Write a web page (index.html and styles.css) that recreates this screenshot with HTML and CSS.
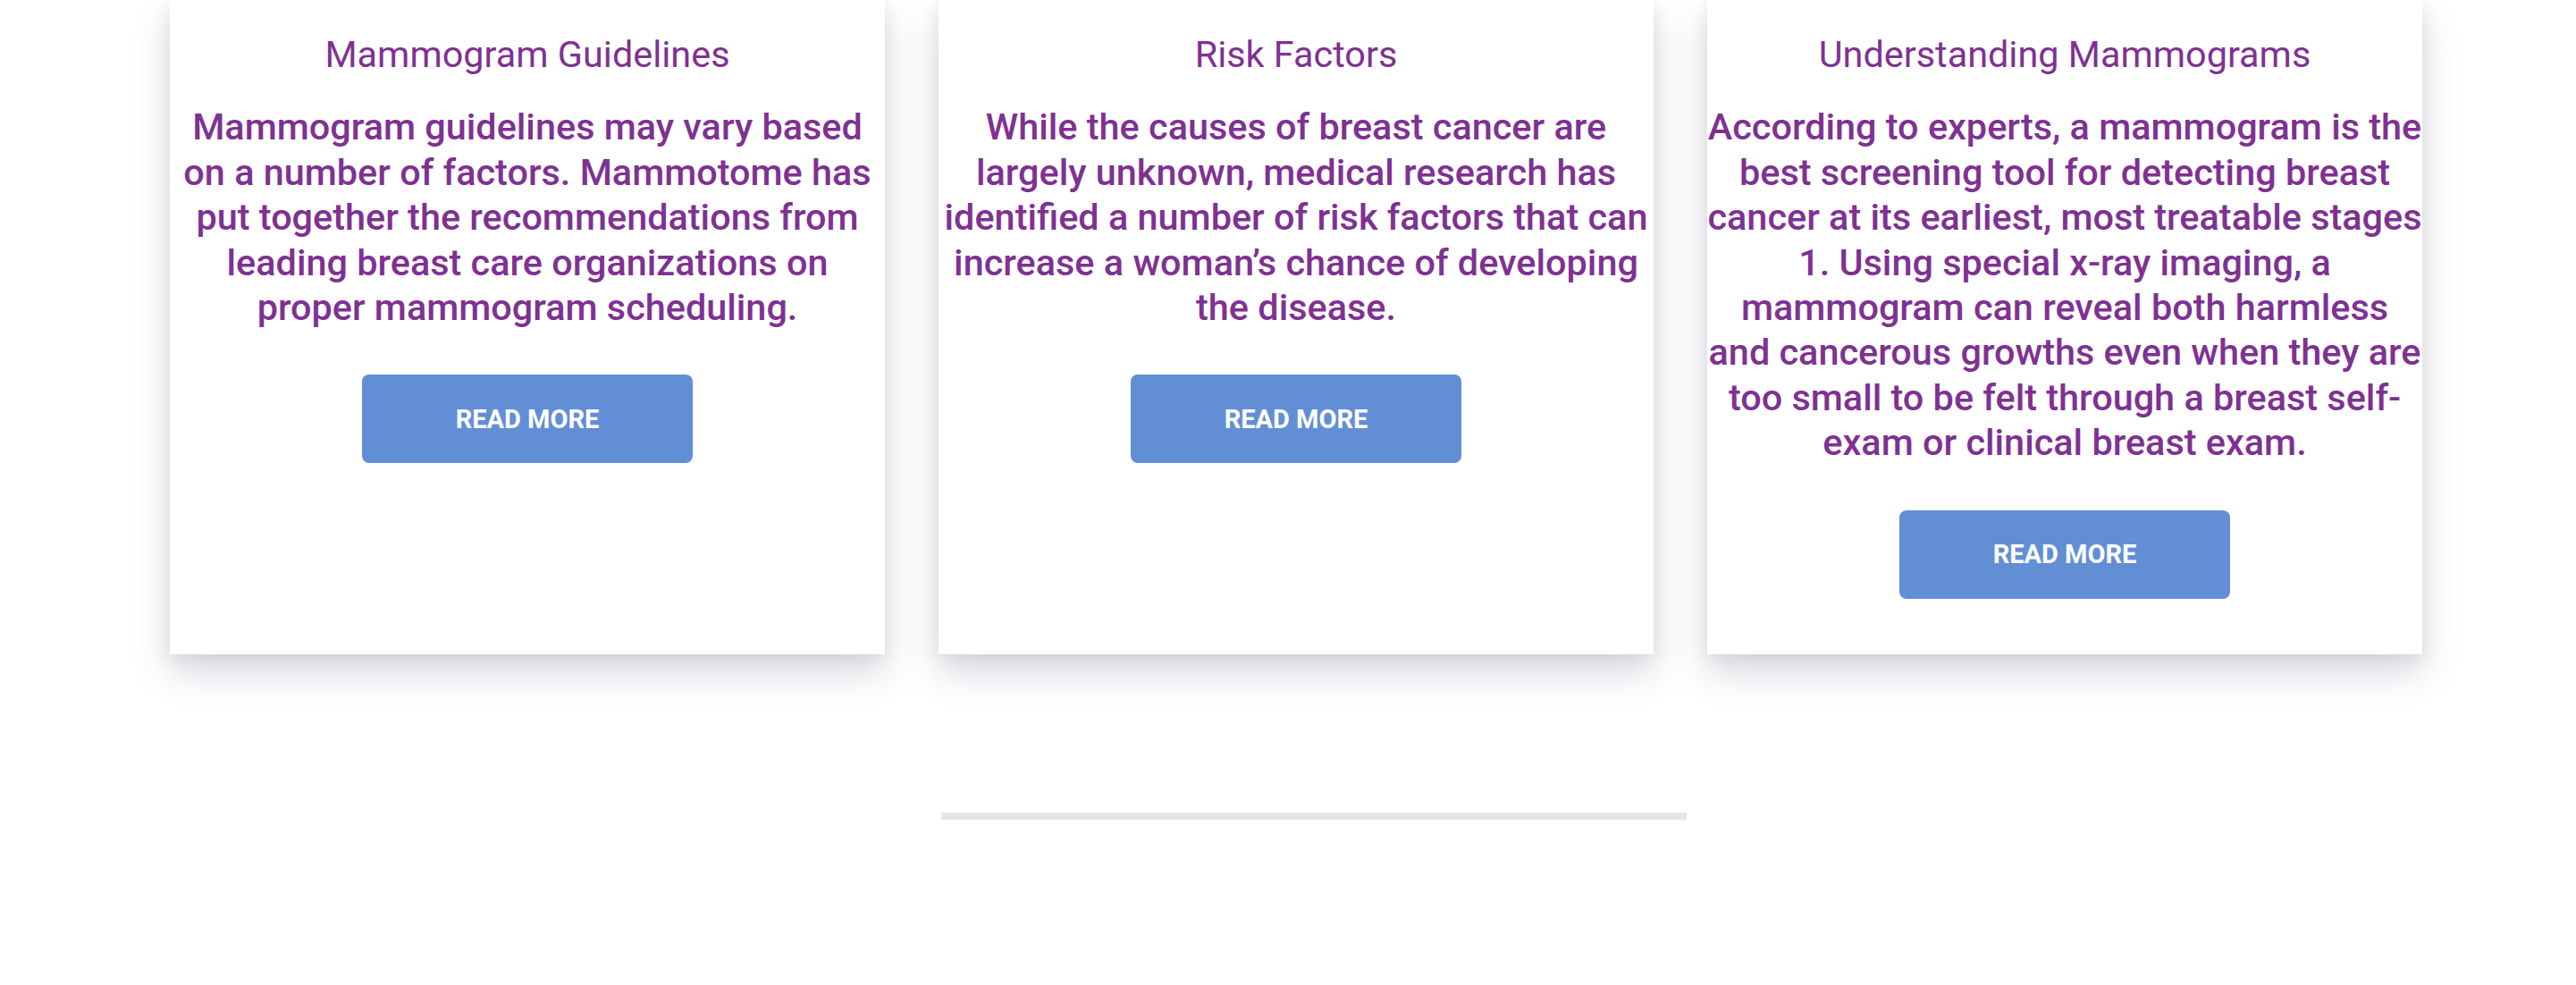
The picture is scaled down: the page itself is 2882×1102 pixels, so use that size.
FILE: index.html
```html
<!DOCTYPE html>
<html lang="en">
<head>
<meta charset="utf-8">
<title>Mammography</title>
<link rel="stylesheet" href="styles.css">
</head>
<body>
<main class="page">
  <section class="cards">
    <article class="card">
      <h3 class="card-title">Mammogram Guidelines</h3>
      <p class="card-text">Mammogram guidelines may vary based on a number of factors. Mammotome has put together the recommendations from leading breast care organizations on proper mammogram scheduling.</p>
      <a class="btn" href="#">READ MORE</a>
    </article>
    <article class="card">
      <h3 class="card-title">Risk Factors</h3>
      <p class="card-text">While the causes of breast cancer are largely unknown, medical research has identified a number of risk factors that can increase a woman’s chance of developing the disease.</p>
      <a class="btn" href="#">READ MORE</a>
    </article>
    <article class="card">
      <h3 class="card-title">Understanding Mammograms</h3>
      <p class="card-text">According to experts, a mammogram is the best screening tool for detecting breast cancer at its earliest, most treatable stages 1. Using special x-ray imaging, a mammogram can reveal both harmless and cancerous growths even when they are too small to be felt through a breast self-exam or clinical breast exam.</p>
      <a class="btn" href="#">READ MORE</a>
    </article>
  </section>
  <hr class="divider">
</main>
</body>
</html>
```

FILE: styles.css
```css
* { box-sizing: border-box; }
html, body {
  margin: 0;
  padding: 0;
  background: #ffffff;
}
body {
  font-family: Roboto, "Liberation Sans", Arial, sans-serif;
  color: #7f3192;
  height: 1102px;
  overflow: hidden;
}
.page {
  padding-left: 190px;
}
.cards {
  display: grid;
  grid-template-columns: repeat(3, 800px);
  column-gap: 60px;
  align-items: stretch;
}
.card {
  background: #ffffff;
  display: flex;
  flex-direction: column;
  align-items: center;
  padding: 36px 0 62px;
  box-shadow: 0 20px 40px rgba(50, 50, 93, 0.18), 0 6px 18px rgba(0, 0, 0, 0.07);
}
.card-title {
  margin: 0 0 31px;
  font-size: 41.4px;
  font-weight: 400;
  line-height: 50.4px;
  text-align: center;
}
.card-text {
  margin: 0 0 50px;
  font-size: 41.4px;
  font-weight: 500;
  line-height: 50.4px;
  text-align: center;
  width: 100%;
}
.btn {
  display: flex;
  align-items: center;
  justify-content: center;
  width: 370px;
  height: 99px;
  border-radius: 8px;
  background: #628ed6;
  color: #ffffff;
  font-size: 29px;
  font-weight: 700;
  text-decoration: none;
}
.divider {
  margin: 177px 0 0 863px;
  width: 834px;
  height: 8px;
  border: 0;
  background: #e9e3e5;
}
```
